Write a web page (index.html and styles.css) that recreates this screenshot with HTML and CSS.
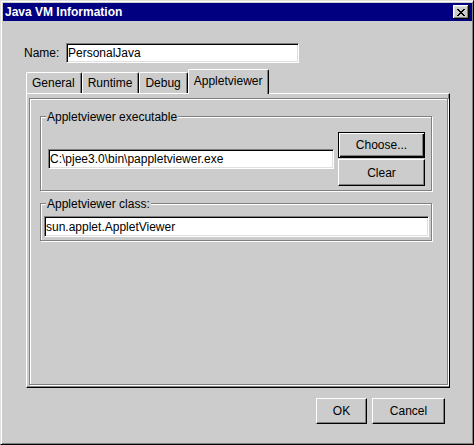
FILE: index.html
```html
<!DOCTYPE html>
<html>
<head>
<meta charset="utf-8">
<link rel="stylesheet" href="styles.css">
</head>
<body>
<div class="window">
  <div class="titlebar">
    <span class="title">Java VM Information</span>
    <span class="close">
      <svg width="8" height="7" viewBox="0 0 8 7" shape-rendering="crispEdges">
        <rect x="0" y="0" width="2" height="1" fill="#000"/>
        <rect x="6" y="0" width="2" height="1" fill="#000"/>
        <rect x="1" y="1" width="2" height="1" fill="#000"/>
        <rect x="5" y="1" width="2" height="1" fill="#000"/>
        <rect x="2" y="2" width="4" height="1" fill="#000"/>
        <rect x="3" y="3" width="2" height="1" fill="#000"/>
        <rect x="2" y="4" width="4" height="1" fill="#000"/>
        <rect x="1" y="5" width="2" height="1" fill="#000"/>
        <rect x="5" y="5" width="2" height="1" fill="#000"/>
        <rect x="0" y="6" width="2" height="1" fill="#000"/>
        <rect x="6" y="6" width="2" height="1" fill="#000"/>
      </svg>
    </span>
  </div>
  <div class="main">
    <div class="name-row">
      <span class="name-label">Name:</span>
      <div class="field name-field">PersonalJava</div>
    </div>
    <div class="tabs">
      <div class="tab">General</div>
      <div class="tab">Runtime</div>
      <div class="tab">Debug</div>
      <div class="tab selected">Appletviewer</div>
    </div>
    <div class="panel">
      <div class="panel-inner">
        <fieldset class="group group-exec">
          <legend>Appletviewer executable</legend>
          <div class="exec-row">
            <div class="field exec-field">C:\pjee3.0\bin\pappletviewer.exe</div>
            <div class="btn-col">
              <div class="btn default choose">Choose...</div>
              <div class="btn clear">Clear</div>
            </div>
          </div>
        </fieldset>
        <fieldset class="group group-class">
          <legend>Appletviewer class:</legend>
          <div class="field class-field">sun.applet.AppletViewer</div>
        </fieldset>
      </div>
    </div>
    <div class="buttons">
      <div class="btn ok">OK</div>
      <div class="btn cancel">Cancel</div>
    </div>
  </div>
</div>
</body>
</html>
```
FILE: styles.css
```css
* { box-sizing: border-box; }
html, body { margin: 0; padding: 0; }
body {
  width: 474px;
  height: 445px;
  overflow: hidden;
  background: #cccccc;
  font-family: "Liberation Sans", Arial, sans-serif;
  font-size: 12px;
  color: #000;
}
.window {
  width: 474px;
  height: 445px;
  background: #cccccc;
  border: 1px solid;
  border-color: #dfdfdf #000 #000 #dfdfdf;
  box-shadow: inset 1px 1px 0 #fff, inset -1px -1px 0 #808080;
  padding: 2px 1px 2px 2px;
  display: flex;
  flex-direction: column;
}
.titlebar {
  height: 18px;
  background: #000080;
  color: #fff;
  font-weight: bold;
  display: flex;
  align-items: center;
  justify-content: space-between;
  padding: 0 3px 0 2px;
}
.close {
  width: 16px;
  height: 14px;
  background: #cccccc;
  box-shadow: inset -1px -1px 0 #000, inset 1px 1px 0 #fff, inset -2px -2px 0 #808080, inset 2px 2px 0 #dfdfdf;
  display: flex;
  align-items: center;
  justify-content: center;
}
.close svg { display: block; }
.main {
  flex: 1;
  display: flex;
  flex-direction: column;
}
.name-row {
  display: flex;
  align-items: center;
  height: 20px;
  margin: 22px 0 0 21px;
}
.name-label { width: 42px; }
.field {
  background: #fff;
  border: 1px solid;
  border-color: #808080 #fff #fff #808080;
  box-shadow: inset 1px 1px 0 #000, inset -1px -1px 0 #dfdfdf;
  padding-left: 1px;
  display: flex;
  align-items: center;
  white-space: nowrap;
  overflow: hidden;
}
.name-field { width: 233px; height: 20px; }
.tabs {
  display: flex;
  align-items: flex-end;
  height: 24px;
  margin: 6px 0 0 23px;
}
.tab {
  height: 21px;
  padding: 0 6px 0 5px;
  border-top: 1px solid #fff;
  border-left: 1px solid #fff;
  border-right: 1px solid #000;
  border-radius: 2px 2px 0 0;
  box-shadow: inset -1px 0 0 #808080;
  display: flex;
  align-items: center;
  white-space: nowrap;
}
.tab.selected {
  height: 25px;
  margin-bottom: -1px;
  padding-bottom: 2px;
  position: relative;
  z-index: 1;
  background: #cccccc;
}
.panel {
  width: 424px;
  height: 295px;
  margin-left: 23px;
  border: 1px solid;
  border-color: #fff #000 #000 #fff;
  box-shadow: inset -1px -1px 0 #808080;
  padding: 4px 1px 2px 2px;
  display: flex;
}
.panel-inner {
  flex: 1;
  border: 1px solid #808080;
  box-shadow: inset 1px 1px 0 #fff, 1px 1px 0 #fff;
  padding: 9px 0 0 10px;
  display: flex;
  flex-direction: column;
  align-items: flex-start;
}
.group {
  margin: 0;
  width: 392px;
  min-width: 0;
  border: 1px solid #808080;
  box-shadow: inset 1px 1px 0 #fff, 1px 1px 0 #fff;
}
.group legend {
  padding: 2px 1px 0 1px;
  line-height: 14px;
  background: #cccccc;
}
.group-exec { padding: 8px 6px 4px 7px; }
.group-exec legend { margin-left: -2px; }
.exec-row {
  display: flex;
  align-items: center;
  gap: 4px;
}
.exec-field { width: 286px; height: 20px; }
.btn-col {
  display: flex;
  flex-direction: column;
  gap: 1px;
}
.btn {
  display: flex;
  align-items: center;
  justify-content: center;
  background: #cccccc;
  border: 1px solid;
  border-color: #fff #000 #000 #fff;
  box-shadow: inset -1px -1px 0 #808080;
}
.btn.default {
  border-color: #000;
  box-shadow: inset 1px 1px 0 #fff, inset -1px -1px 0 #000, inset -2px -2px 0 #808080;
}
.choose { width: 87px; height: 26px; }
.clear { width: 87px; height: 27px; }
.group-class {
  margin-top: 4px;
  padding: 5px 1px 3px 3px;
}
.group-class legend { margin-left: 2px; }
.class-field { width: 385px; height: 21px; }
.buttons {
  display: flex;
  justify-content: flex-end;
  gap: 5px;
  margin-top: 10px;
  padding-right: 27px;
}
.ok { width: 51px; height: 26px; }
.cancel { width: 73px; height: 26px; }
```
